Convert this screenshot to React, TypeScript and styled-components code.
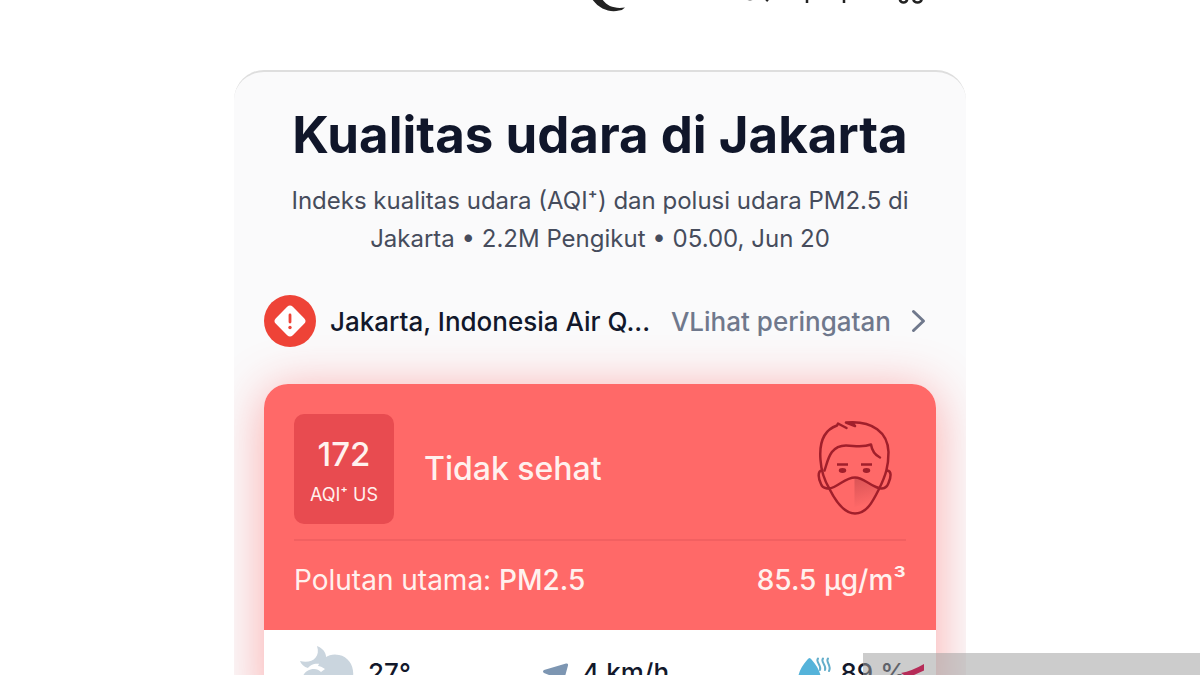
import React from "react";
import styled, { createGlobalStyle } from "styled-components";

const GlobalStyle = createGlobalStyle`
  *, *::before, *::after { box-sizing: border-box; }
  body {
    margin: 0;
    background: #fff;
    font-family: Inter, "Liberation Sans", sans-serif;
    color: #12182b;
  }
`;

const Page = styled.div`
  position: relative;
  height: 100vh;
  overflow: hidden;
`;

const Masthead = styled.header`
  display: flex;
  justify-content: center;
  height: 70px;
`;

const Panel = styled.main`
  width: 61%;
  margin: 0 auto;
  padding: 33px 30px 40px;
  overflow: hidden;
  background: #fafafb;
  border-top: 2px solid #dedede;
  border-radius: 30px 30px 0 0;
`;

const Title = styled.h1`
  margin: 0;
  font-size: 51px;
  line-height: 60px;
  font-weight: 700;
  text-align: center;
  white-space: nowrap;
  color: #10162a;
`;

const Summary = styled.p`
  margin: 17px 0 37px;
  font-size: 24px;
  line-height: 38px;
  text-align: center;
  color: #464c5c;
`;

const AlertRow = styled.div`
  display: flex;
  align-items: center;
  justify-content: space-between;
  gap: 16px;
  height: 52px;
  padding-right: 10px;
  font-size: 26px;
  font-weight: 500;
  white-space: nowrap;
`;

const AlertInfo = styled.div`
  display: flex;
  align-items: center;
  gap: 14px;
`;

const AlertLink = styled.a`
  display: flex;
  align-items: center;
  gap: 20px;
  color: #6f788c;
  text-decoration: none;
`;

const AirCard = styled.section`
  margin-top: 37px;
  border-radius: 24px;
  background: #fff;
  box-shadow: 0 6px 50px rgba(255, 80, 80, 0.48);
`;

const Reading = styled.div`
  padding: 30px;
  border-radius: 24px 24px 0 0;
  background: #ff6968;
  color: #fff1ee;
`;

const Level = styled.div`
  display: flex;
  align-items: center;
  padding-bottom: 15px;
  border-bottom: 2px solid #f26061;
`;

const Badge = styled.div`
  display: flex;
  flex-direction: column;
  align-items: center;
  width: 100px;
  height: 110px;
  padding-top: 20px;
  border-radius: 10px;
  background: #e84b50;
`;

const BadgeValue = styled.span`
  font-size: 33px;
  line-height: 40px;
  font-weight: 500;
`;

const BadgeUnit = styled.span`
  font-size: 18px;
  line-height: 42px;
`;

const Status = styled.h2`
  flex: 1;
  margin: 0 0 0 30px;
  font-size: 32px;
  line-height: 40px;
  font-weight: 500;
`;

const Pollutant = styled.div`
  display: flex;
  justify-content: space-between;
  padding-top: 19px;
  font-size: 28px;
  line-height: 40px;
  white-space: nowrap;

  strong { font-weight: 500; }
`;

const Weather = styled.div`
  display: flex;
  justify-content: space-between;
  padding: 16px 30px;
`;

const WeatherItem = styled.div`
  display: flex;
  align-items: center;
  gap: ${(p: { $gap: number }) => p.$gap}px;
  height: 52px;
  font-size: 26px;
  font-weight: 500;
  white-space: nowrap;

  svg { align-self: flex-start; }
`;

const Watermark = styled.div`
  position: absolute;
  right: 0;
  bottom: 0;
  width: 28.1%;
  height: 22px;
  background: rgba(160, 160, 160, 0.54);

  svg { display: block; margin-left: 36px; }
`;

const LogoEdge = () => (
  <svg width="640" height="16" viewBox="280 0 640 16" fill="none" stroke="#222" strokeLinecap="round" overflow="visible" aria-hidden="true">
    <path d="M592 -1 C599 9 610 13 619 10.500 Q623 10 625 7.500 C614 9 607 6 602 -1Z" fill="#222" stroke="none" />
    <path d="M744 -1 Q750 1 756 -1" strokeWidth="1" />
    <path d="M764 -3 L768 1 M807 -2 V3 M844 -2 V3" strokeWidth="2.500" strokeLinecap="butt" />
    <path d="M899.500 -2 Q900 2.500 903.500 2.500 Q907 2.500 907.500 -2 M913 -2 Q913.500 2.500 917.500 2.500 Q921.500 2.500 922 -2" strokeWidth="2.500" />
  </svg>
);

const WarningIcon = () => (
  <svg width="52" height="52" viewBox="0 0 52 52" aria-hidden="true">
    <circle cx="26" cy="26" r="26" fill="#ee4337" />
    <rect x="14" y="14" width="24" height="24" rx="4" fill="#fff" transform="rotate(45 26 26)" />
    <path d="M26 20 V27" stroke="#ee4337" strokeWidth="2.800" strokeLinecap="round" />
    <circle cx="26" cy="32.500" r="1.700" fill="#ee4337" />
  </svg>
);

const Chevron = () => (
  <svg width="15" height="24" viewBox="0 0 15 24" fill="none" stroke="#6f788c" strokeWidth="3" strokeLinecap="round" strokeLinejoin="round" aria-hidden="true">
    <path d="M2.500 2.500 L12.500 12 L2.500 21.500" />
  </svg>
);

const MaskedFace = () => (
  <svg width="106" height="110" viewBox="800 414 106 110" fill="none" stroke="#a11f2b" strokeWidth="2.500" strokeLinecap="round" strokeLinejoin="round" aria-hidden="true">
    <defs>
      <linearGradient id="maskShade" x1="856" y1="480" x2="864" y2="506" gradientUnits="userSpaceOnUse">
        <stop offset="0" stopColor="#dc5557" />
        <stop offset="1" stopColor="#ff6968" />
      </linearGradient>
    </defs>
    <path d="M854.5 477.5 C863 478 869 488 878 488 L871 503 L854.5 507Z" fill="url(#maskShade)" stroke="none" />
    <path d="M837 425.500 C824 430 819 442 820.500 460 C821 468 823 478 829.500 489 C835 500 843 513.500 855 513.500 C867 513.500 873 501 879 489 C886 475 888.500 466 888.500 452 C888 433 873 420 846 422.500 M837 425.500 L838 423.500 L846.500 428 M846 422.500 L855 426 L853 424" />
    <path d="M824.500 470.500 C828 461 829.500 445.500 846 445.500 C854 445.500 862 448 871 444.500 C872 451 875 455 880 457.500" />
    <path d="M822 470.500 C817 471 818.500 479 821 484 C822.500 489 829 489.500 834 487 C842 483 847 477.500 855 477.500 C863 477.500 868 484 876 487 C883 490 887 488 888.500 483 C891 477 892 471 887 470.500" />
    <path d="M837 464.500 H848 M861 464.500 H872" strokeLinecap="butt" />
    <ellipse cx="842.500" cy="470.500" rx="2.500" ry="1.200" fill="#a11f2b" />
    <ellipse cx="866.500" cy="470.500" rx="2.500" ry="1.200" fill="#a11f2b" />
  </svg>
);

const NightCloud = () => (
  <svg width="60" height="50" viewBox="294 646 60 50" fill="#cad5de" aria-hidden="true">
    <path d="M317 646 C325 649 328 656 325 663 L323 665 C316 662 310 665 308 668 C304 667 301 664 300 661 C311 664 321 658 317 646Z" />
    <path d="M303 690 C299 679 304 669 314 669 C317 669 319 670 321 672 L325 669 C322 667 320 666 318 666 C322 657 331 653 339 655 C350 657 356 669 352 681 C350 687 345 690 340 690Z" />
  </svg>
);

const WindArrow = () => (
  <svg width="28" height="50" viewBox="542 645 28 50" fill="#7d96b2" aria-hidden="true">
    <path d="M546 669 L568 662.500 Q570.500 662 570 664.500 L563 690 Q562 692 560.500 690 L556 676 L546 672 Q544 670.500 546 669Z" />
  </svg>
);

const Humidity = () => (
  <svg width="32" height="50" viewBox="798 646 32 50" overflow="visible" aria-hidden="true">
    <path d="M807.500 659.500 Q809.500 656.500 811.500 659.500 C817 666 821 672 821 680 A11.500 11 0 0 1 798 680 C798 672 802 666 807.500 659.500Z" fill="#55b3da" />
    <path d="M818 658.500 C815 662 822 665 820 670 M823 658.500 C820 662 827 665 825 670 M828 658.500 C825 662 832 665 829 671" fill="none" stroke="#64aecb" strokeWidth="2" strokeLinecap="round" />
  </svg>
);

export default function App() {
  return (
    <>
      <GlobalStyle />
      <Page>
        <Masthead>
          <LogoEdge />
        </Masthead>
        <Panel>
          <Title>Kualitas udara di Jakarta</Title>
          <Summary>
            Indeks kualitas udara (AQI⁺) dan polusi udara PM2.5 di
            <br />
            Jakarta • 2.2M Pengikut • 05.00, Jun 20
          </Summary>
          <AlertRow>
            <AlertInfo>
              <WarningIcon />
              <span>Jakarta, Indonesia Air Q...</span>
            </AlertInfo>
            <AlertLink href="#peringatan">
              VLihat peringatan
              <Chevron />
            </AlertLink>
          </AlertRow>
          <AirCard>
            <Reading>
              <Level>
                <Badge>
                  <BadgeValue>172</BadgeValue>
                  <BadgeUnit>AQI⁺ US</BadgeUnit>
                </Badge>
                <Status>Tidak sehat</Status>
                <MaskedFace />
              </Level>
              <Pollutant>
                <span>
                  Polutan utama: <strong>PM2.5</strong>
                </span>
                <strong>85.5 µg/m³</strong>
              </Pollutant>
            </Reading>
            <Weather>
              <WeatherItem $gap={14}>
                <NightCloud />
                <span>27°</span>
              </WeatherItem>
              <WeatherItem $gap={14}>
                <WindArrow />
                <span>4 km/h</span>
              </WeatherItem>
              <WeatherItem $gap={10}>
                <Humidity />
                <span>89 %</span>
              </WeatherItem>
            </Weather>
          </AirCard>
        </Panel>
        <Watermark>
          <svg width="30" height="22" viewBox="899 653 30 22" aria-hidden="true">
            <path d="M901 673 Q912 671 924 664 V670.500 L914 675 H904Z" fill="#b62c58" />
          </svg>
        </Watermark>
      </Page>
    </>
  );
}
